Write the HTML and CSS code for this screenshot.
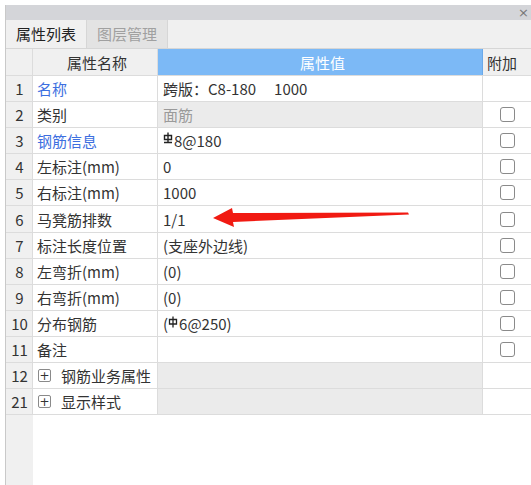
FILE: index.html
```html
<!DOCTYPE html>
<html>
<head>
<meta charset="utf-8">
<link rel="stylesheet" href="styles.css">
</head>
<body>
<div class="panel">
  <div class="titlebar"><span class="close">×</span></div>
  <div class="tabs">
    <div class="tab active">属性列表</div>
    <div class="tab">图层管理</div>
  </div>
  <div class="grid">
    <div class="row head">
      <div class="c num"></div>
      <div class="c name center">属性名称</div>
      <div class="c val hv center">属性值</div>
      <div class="c add">附加</div>
    </div>
    <div class="row"><div class="c num">1</div><div class="c name link">名称</div><div class="c val">跨版：C8-180<span class="gap"></span>1000</div><div class="c add"></div></div>
    <div class="row"><div class="c num">2</div><div class="c name">类别</div><div class="c val dis">面筋</div><div class="c add"><span class="cb"></span></div></div>
    <div class="row"><div class="c num">3</div><div class="c name link">钢筋信息</div><div class="c val"><svg class="sym sym3" viewBox="0 0 10 12" width="10" height="12"><path d="M5 0.5V10.5M1.5 3.5H8.5V7.5H1.5Z M1 10.5H9" fill="none" stroke="#222" stroke-width="1.4"/></svg>8@180</div><div class="c add"><span class="cb"></span></div></div>
    <div class="row"><div class="c num">4</div><div class="c name">左标注(mm)</div><div class="c val">0</div><div class="c add"><span class="cb"></span></div></div>
    <div class="row"><div class="c num">5</div><div class="c name">右标注(mm)</div><div class="c val">1000</div><div class="c add"><span class="cb"></span></div></div>
    <div class="row"><div class="c num">6</div><div class="c name">马凳筋排数</div><div class="c val">1/1</div><div class="c add"><span class="cb"></span></div></div>
    <div class="row"><div class="c num">7</div><div class="c name">标注长度位置</div><div class="c val">(支座外边线)</div><div class="c add"><span class="cb"></span></div></div>
    <div class="row"><div class="c num">8</div><div class="c name">左弯折(mm)</div><div class="c val">(0)</div><div class="c add"><span class="cb"></span></div></div>
    <div class="row"><div class="c num">9</div><div class="c name">右弯折(mm)</div><div class="c val">(0)</div><div class="c add"><span class="cb"></span></div></div>
    <div class="row"><div class="c num">10</div><div class="c name">分布钢筋</div><div class="c val">(<svg class="sym sym10" viewBox="0 0 10 12" width="10" height="12"><path d="M5 0.5V11.5M1.5 3.5H8.5V8H1.5Z" fill="none" stroke="#222" stroke-width="1.3"/></svg>6@250)</div><div class="c add"><span class="cb"></span></div></div>
    <div class="row"><div class="c num">11</div><div class="c name">备注</div><div class="c val"></div><div class="c add"><span class="cb"></span></div></div>
    <div class="row"><div class="c num">12</div><div class="c name"><span class="plus">+</span>钢筋业务属性</div><div class="c val dis"></div><div class="c add"></div></div>
    <div class="row"><div class="c num">21</div><div class="c name"><span class="plus">+</span>显示样式</div><div class="c val dis"></div><div class="c add"></div></div>
  </div>
  <div class="rest"><div class="restnum"></div></div>
</div>
<svg class="arrow" width="531" height="485" viewBox="0 0 531 485"><polygon points="213,218 232,208 233,213 408,212.5 409,214.5 233,222 234,227" fill="#f11a12"/></svg>
</body>
</html>
```
FILE: styles.css
```css
html, body {
  margin: 0;
  padding: 0;
  background: #ffffff;
  font-family: "Noto Sans CJK SC", "Noto Sans", sans-serif;
  font-size: 15px;
  color: #333333;
}
.panel {
  margin: 5px 0 0 5px;
  height: 480px;
  border-left: 1px solid #c9c9c9;
  display: flex;
  flex-direction: column;
  box-sizing: border-box;
}
.titlebar {
  height: 15px;
  background: #d4d5d9;
  position: relative;
}
.close {
  position: absolute;
  right: 2px;
  top: 0;
  font-size: 13px;
  line-height: 15px;
  color: #777;
  font-family: "DejaVu Sans", sans-serif;
}
.tabs {
  height: 28px;
  background: #f0f0f0;
  display: flex;
  border-bottom: 1px solid #d6d6d6;
}
.tab {
  width: 80px;
  text-align: center;
  line-height: 28px;
  color: #a0a0a0;
  background: #e3e3e3;
  border-right: 1px solid #d6d6d6;
  font-size: 15px;
}
.tab.active {
  color: #222;
  background: #f0f0f0;
  border-right: 1px solid #d6d6d6;
}
.grid {
  display: flex;
  flex-direction: column;
}
.row {
  display: grid;
  grid-template-columns: 27px 125px 325px 48px;
  height: 26.1px;
  border-bottom: 1px solid #dcdcdc;
  box-sizing: border-box;
}
.row.head {
  height: 27px;
}
.c {
  display: flex;
  align-items: center;
  border-right: 1px solid #dcdcdc;
  box-sizing: border-box;
  white-space: nowrap;
  overflow: hidden;
}
.c.add {
  border-right: none;
  justify-content: center;
}
.num {
  background: #f0f0f0;
  justify-content: center;
  color: #333;
  padding-left: 1px;
}
.name {
  padding-left: 4px;
  background: #fff;
}
.head .name {
  background: #f0f0f0;
}
.head .add {
  background: #f0f0f0;
  justify-content: flex-start;
  padding-left: 4px;
}
.center {
  justify-content: center;
}
.val {
  padding-left: 5px;
  background: #fff;
}
.gap {
  display: inline-block;
  width: 18px;
}
.val.hv {
  background: #7cb9f6;
  color: #fff;
  border-right: 1px solid #6aa9ea;
}
.val.dis {
  background: #ebebeb;
  color: #9a9a9a;
}
.link {
  color: #3d6fe0;
}
.cb {
  width: 15px;
  height: 15px;
  border: 1px solid #8a8a8a;
  border-radius: 3px;
  box-sizing: border-box;
  background: #fff;
}
.sym {
  margin-right: 1px;
  margin-top: -5px;
}
.sym10 {
  margin-top: -3px;
}
.plus {
  width: 13px;
  height: 13px;
  border: 1px solid #8a8a8a;
  border-radius: 2px;
  box-sizing: border-box;
  display: inline-flex;
  align-items: center;
  justify-content: center;
  font-size: 12px;
  line-height: 1;
  margin-left: 1px;
  margin-right: 10px;
  font-family: "DejaVu Sans", sans-serif;
}
.rest {
  flex: 1;
  display: flex;
}
.restnum {
  width: 27px;
  background: #f0f0f0;
}
.arrow {
  position: absolute;
  left: 0;
  top: 0;
  pointer-events: none;
}
```
